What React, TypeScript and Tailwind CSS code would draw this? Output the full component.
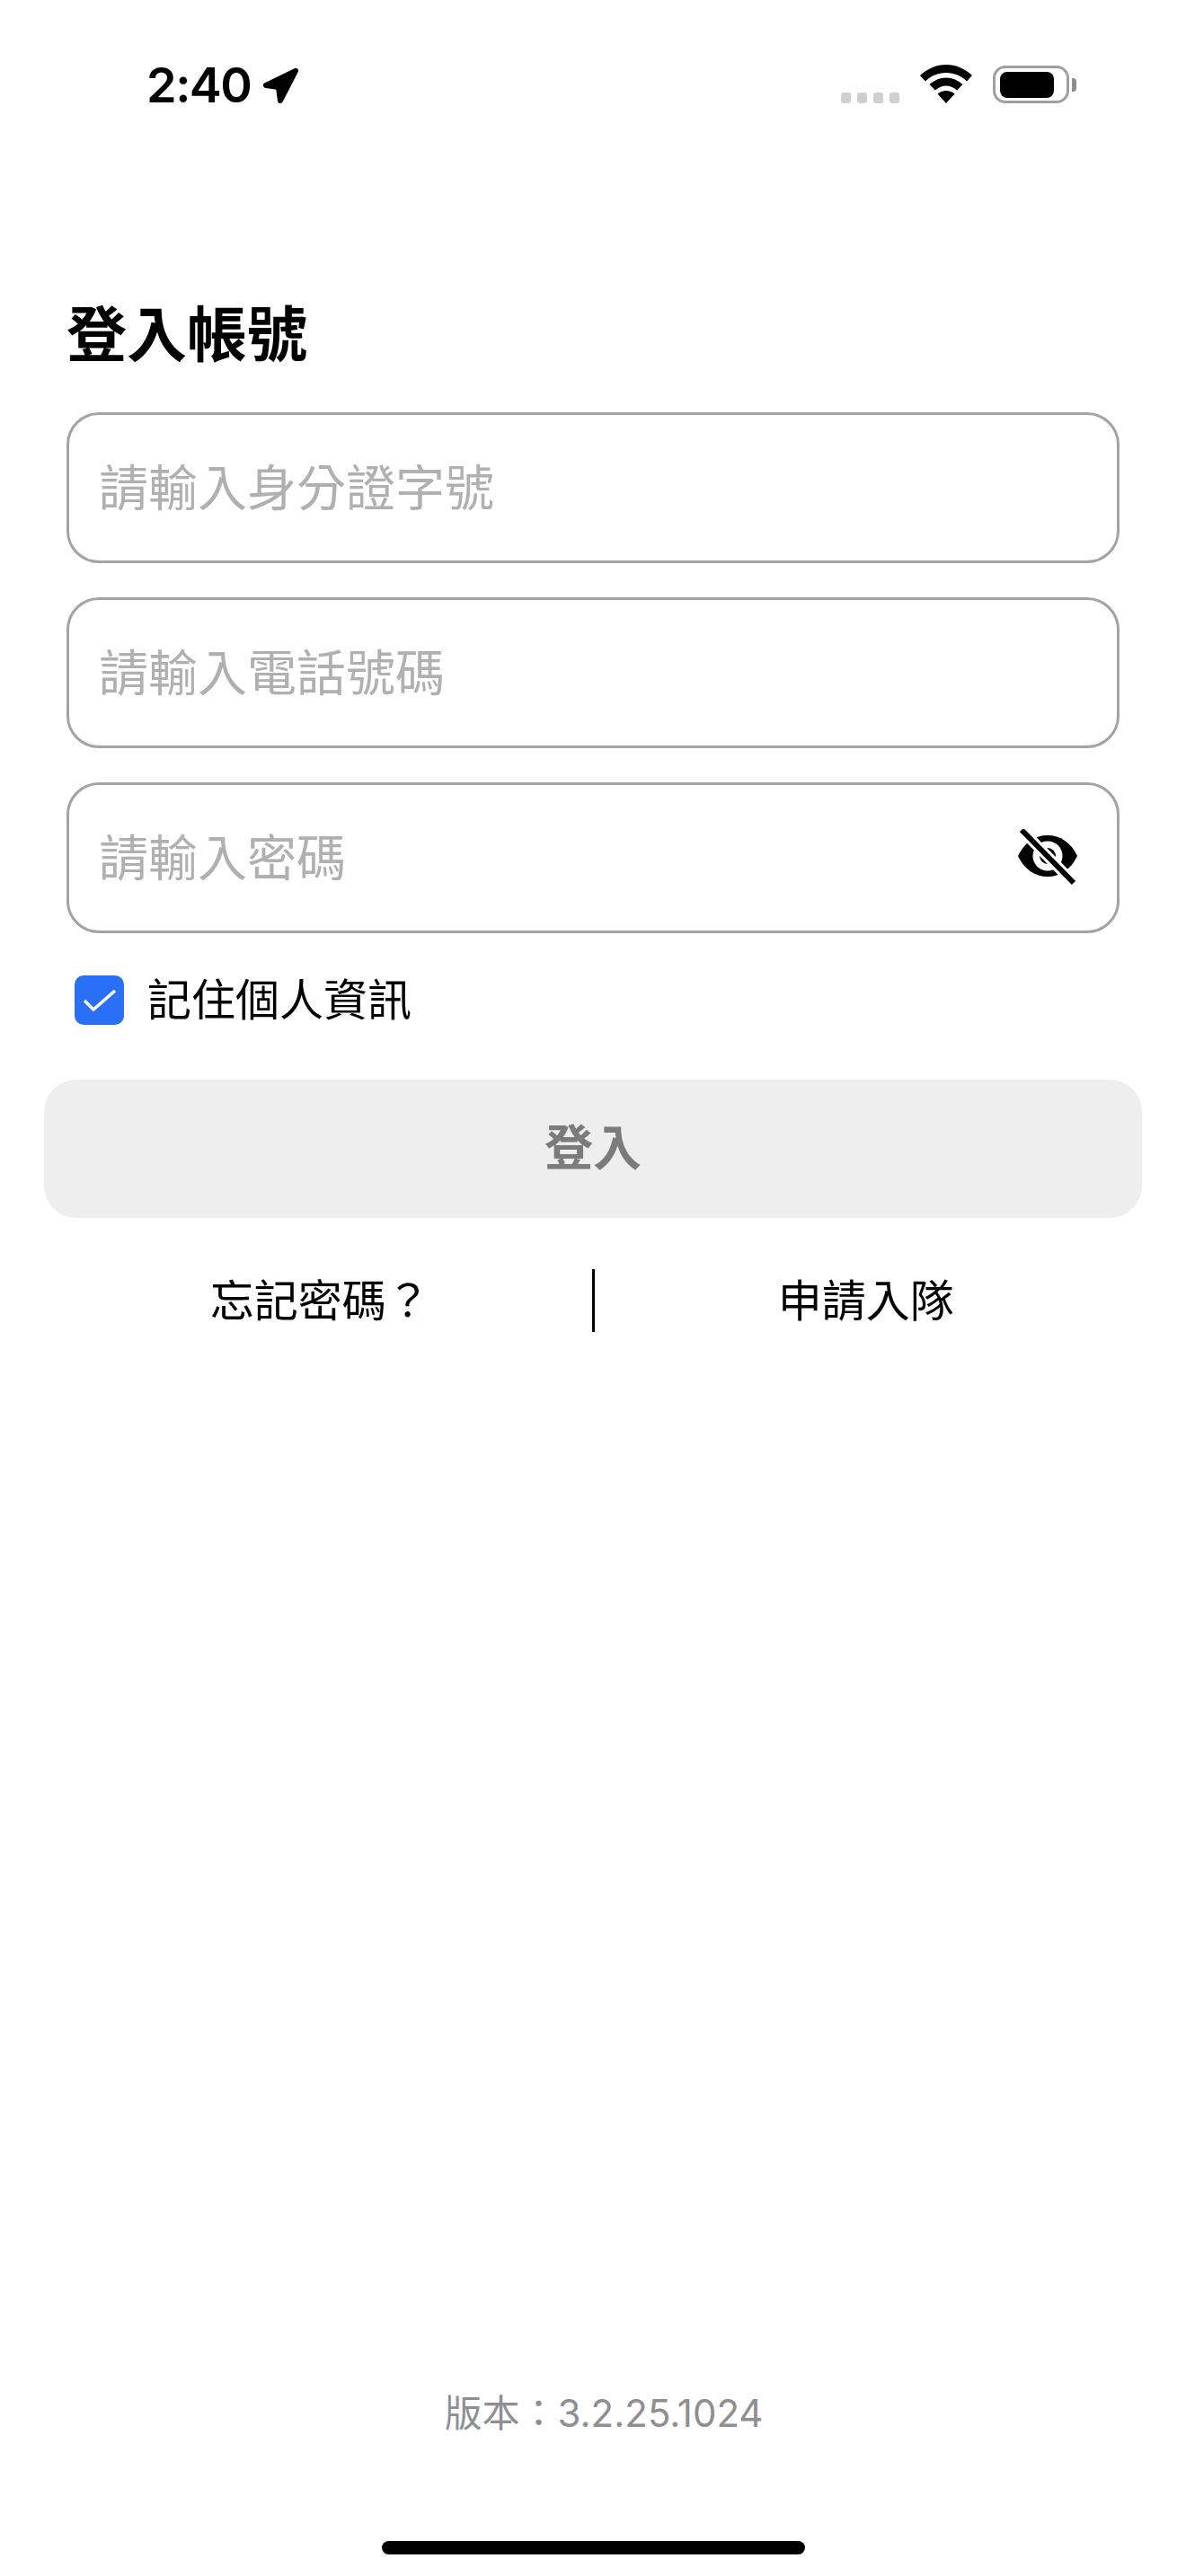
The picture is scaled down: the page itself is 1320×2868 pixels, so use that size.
const CJK = "font-['Inter','Noto_Sans_CJK_TC',sans-serif]";

function StatusBar() {
    return (
        <div className="flex h-[322px] items-start justify-between pl-[163px] pr-[122px] pt-[70px]">
            <div className="flex h-[50px] items-center">
                <span className="font-['Inter',sans-serif] text-[54px] leading-[50px] font-semibold tracking-[-1.5px] text-black">2:40</span>
                <svg className="ml-[12px]" width="44" height="44" viewBox="0 0 44 44">
                    <path
                        d="M38 6 5 22 19 24 21 39Z"
                        fill="#000"
                        stroke="#000"
                        strokeWidth="6"
                        strokeLinejoin="round"
                    />
                </svg>
            </div>
            <div className="flex h-[46px] items-end">
                <div className="flex gap-[7px] pb-[1px]">
                    <div className="h-[12px] w-[11px] rounded-[3px] bg-[#cfcfcf]" />
                    <div className="h-[12px] w-[11px] rounded-[3px] bg-[#cfcfcf]" />
                    <div className="h-[12px] w-[11px] rounded-[3px] bg-[#cfcfcf]" />
                    <div className="h-[12px] w-[11px] rounded-[3px] bg-[#cfcfcf]" />
                </div>
                <svg className="ml-[23px]" width="58" height="44" viewBox="0 0 58 44">
                    <path
                        d="M29 0C18 0 8 4.500 0 12l6 6.500C12 12.500 20 9 29 9s17 3.500 23 9.500l6-6.500C50 4.500 40 0 29 0Z"
                        fill="#000"
                    />
                    <path
                        d="M29 14.500c-7 0-13.500 3-18.500 7.500l6.300 6.500C20 25.500 24.500 23.500 29 23.500s9 2 12.200 5l6.300-6.500c-5-4.500-11.500-7.500-18.500-7.500Z"
                        fill="#000"
                    />
                    <path d="M29 29c-3.500 0-7 1.500-9.500 3.500L29 43l9.500-10.500C36 30.500 32.500 29 29 29Z" fill="#000" />
                </svg>
                <div className="mb-[1px] ml-[23px] flex items-center">
                    <div className="flex h-[42px] w-[85px] items-center rounded-[14px] border-[3px] border-[#a0a0a0] pl-[5px]">
                        <div className="h-[29px] w-[60px] rounded-[8px] bg-black" />
                    </div>
                    <div className="ml-[3px] h-[15px] w-[5px] rounded-r-[4px] bg-[#8c8c8c]" />
                </div>
            </div>
        </div>
    );
}

function EyeOff() {
    return (
        <svg width="68" height="64" viewBox="0 0 68 64">
            <path d="M1 30C8 15 20 7 34 7s26 8 33 23c-7 15-19 23-33 23S8 45 1 30Z" fill="#000" />
            <circle cx="34" cy="30" r="16.500" fill="#fff" />
            <circle cx="34" cy="30" r="9" fill="#000" />
            <path d="M5 1 63 60" stroke="#fff" strokeWidth="12" />
            <path d="M5 1 63 60" stroke="#000" strokeWidth="6" />
        </svg>
    );
}

function Field({ label, children }: { label: string; children?: React.ReactNode }) {
    return (
        <div className="flex h-[168px] items-center justify-between rounded-[36px] border-[3px] border-[#a3a3a3] pl-[33px] pr-[43px]">
            <span className="text-[55px] leading-none text-[#b0b0b0]">{label}</span>
            {children}
        </div>
    );
}

export default function App() {
    return (
        <div className={`flex h-[2868px] w-[1320px] flex-col bg-white ${CJK}`}>
            <StatusBar />

            <div className="flex flex-1 flex-col">
                <h1 className="ml-[74px] mt-[3px] text-[67px] leading-[96px] font-bold text-black">登入帳號</h1>

                <div className="mx-[74px] mt-[38px] flex flex-col gap-[38px]">
                    <Field label="請輸入身分證字號" />
                    <Field label="請輸入電話號碼" />
                    <Field label="請輸入密碼">
                        <EyeOff />
                    </Field>
                </div>

                <div className="ml-[83px] mt-[47px] flex h-[55px] items-center">
                    <div className="flex h-[55px] w-[55px] items-center justify-center rounded-[10px] bg-[#2970f6]">
                        <svg width="36" height="24" viewBox="0 0 36 24">
                            <path d="M1 12 11 22 35 1" fill="none" stroke="#fff" strokeWidth="3.500" />
                        </svg>
                    </div>
                    <span className="ml-[26px] text-[49px] leading-none text-black">記住個人資訊</span>
                </div>

                <div className="mx-[49px] mt-[61px] flex h-[154px] items-center justify-center rounded-[36px] bg-[#eeeeee]">
                    <span className="text-[54px] leading-none font-semibold text-[#7b7b7b]">登入</span>
                </div>

                <div className="mx-[54px] mt-[57px] flex h-[70px] items-center">
                    <div className="flex flex-1 justify-center">
                        <span className="text-[49px] leading-none text-black">忘記密碼？</span>
                    </div>
                    <div className="h-[70px] w-[3px] bg-black" />
                    <div className="flex flex-1 justify-center">
                        <span className="text-[49px] leading-none text-black">申請入隊</span>
                    </div>
                </div>

                <div className="mt-auto flex justify-center pl-[24px]">
                    <span className="text-[42px] leading-[56px] text-[#8e8e93]">版本：3.2.25.1024</span>
                </div>
            </div>

            <div className="flex h-[153px] shrink-0 items-start justify-center pt-[114px]">
                <div className="h-[15px] w-[471px] rounded-full bg-black" />
            </div>
        </div>
    );
}
